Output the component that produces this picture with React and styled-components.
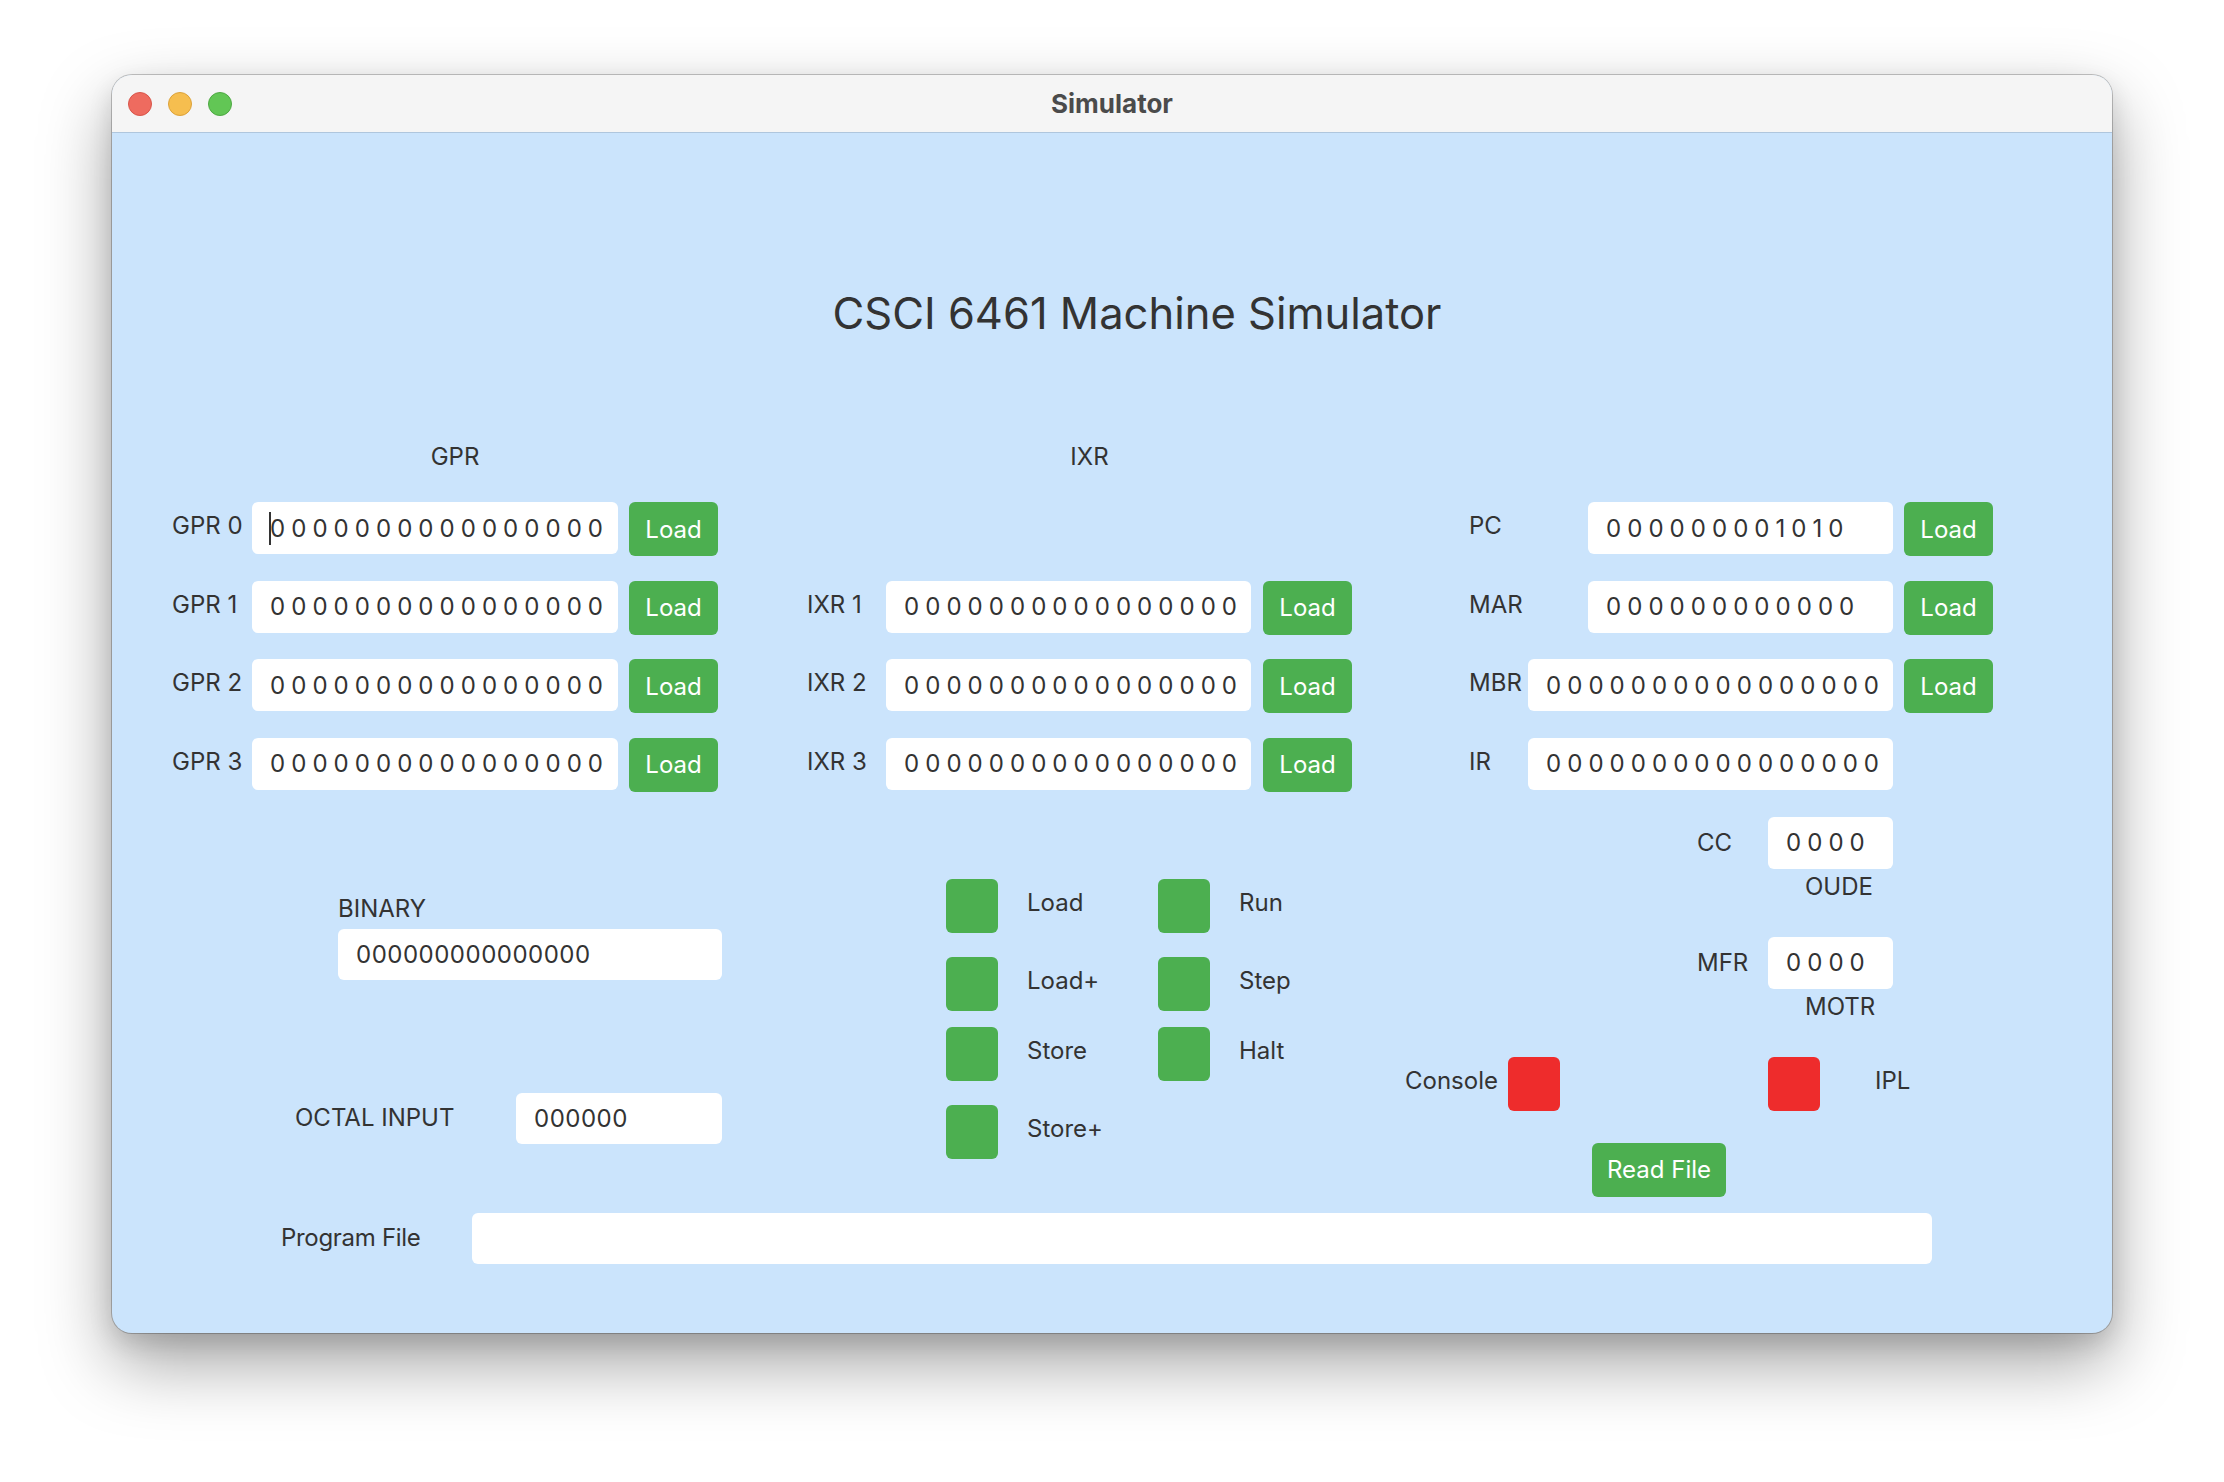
import React from 'react';
import styled, { createGlobalStyle } from 'styled-components';

const GlobalStyle = createGlobalStyle`
  html, body { margin: 0; padding: 0; background: #ffffff; }
  body { font-family: Inter, "Noto Sans", sans-serif; color: #333333; }
  *, *::before, *::after { box-sizing: border-box; }
`;

const FONT = 'Inter, "Noto Sans", sans-serif';

const Page = styled.div`
  width: 2224px;
  height: 1482px;
  padding: 75px 0 0 112px;
  background: #ffffff;
  overflow: hidden;
`;

const Window = styled.div`
  width: 2000px;
  height: 1258px;
  border-radius: 20px;
  overflow: hidden;
  display: flex;
  flex-direction: column;
  background: #cbe4fc;
  box-shadow: 0 0 0 1px rgba(0, 0, 0, 0.22), 0 30px 70px rgba(0, 0, 0, 0.36),
    0 10px 24px rgba(0, 0, 0, 0.12);
`;

const TitleBar = styled.header`
  height: 58px;
  flex: none;
  display: grid;
  grid-template-columns: 1fr auto 1fr;
  align-items: center;
  padding: 0 16px;
  background: #f5f5f5;
  border-bottom: 1px solid #afc6dd;
`;

const TrafficLights = styled.div`
  display: flex;
  gap: 16px;
`;

const Light = styled.span`
  width: 24px;
  height: 24px;
  border-radius: 50%;
  background: ${(p) => p.$fill};
  border: 1px solid ${(p) => p.$edge};
`;

const WindowTitle = styled.div`
  font-family: ${FONT};
  font-size: 26px;
  font-weight: 700;
  color: #4b4b4b;
`;

const Content = styled.main`
  flex: 1;
  padding-top: 153px;
  display: flex;
  flex-direction: column;
`;

const Title = styled.h1`
  margin: 0;
  padding-left: 50px;
  text-align: center;
  font-family: ${FONT};
  font-size: 43.5px;
  line-height: 54px;
  font-weight: 400;
  color: #333333;
`;

const RegisterArea = styled.div`
  display: flex;
  align-items: flex-start;
  margin-top: 102px;
  padding-left: 60px;
`;

const RegisterGroup = styled.section`
  display: flex;
  flex-direction: column;
  gap: 30px;
  margin-left: ${(p) => p.$offset}px;
`;

const GroupHeader = styled.div`
  height: 30px;
  line-height: 30px;
  font-size: 24px;
  text-align: center;
  padding-left: 20px;
  color: #333333;
`;

const RegisterRows = styled.div`
  display: flex;
  flex-direction: column;
  gap: 24.5px;
  padding-top: ${(p) => (p.$skip || 0) * 78.5}px;
`;

const RegisterRow = styled.div`
  display: grid;
  grid-template-columns: ${(p) => p.$labelW}px ${(p) => p.$fieldW}px 89px;
  column-gap: 11px;
  height: 54px;
  align-items: start;
`;

const RowLabel = styled.span`
  font-size: 24px;
  line-height: 30px;
  margin-top: 9px;
  white-space: nowrap;
  color: #333333;
`;

const FieldWrap = styled.div`
  position: relative;
  justify-self: ${(p) => (p.$end ? 'end' : 'start')};
`;

const Field = styled.input`
  display: block;
  width: ${(p) => p.$width}px;
  height: ${(p) => p.$height || 52}px;
  border: none;
  border-radius: 6px;
  background: #ffffff;
  padding: 0 0 0 18px;
  margin: 0;
  font-family: ${FONT};
  font-size: 24px;
  letter-spacing: 0.5px;
  word-spacing: -1.7px;
  color: #333333;
  outline: none;
`;

const Caret = styled.span`
  position: absolute;
  left: 17px;
  top: 10px;
  width: 2px;
  height: 33px;
  background: #333333;
`;

const GreenButton = styled.button`
  width: ${(p) => p.$width || 89}px;
  height: 54px;
  border: none;
  border-radius: 6px;
  background: #4caf50;
  color: #ffffff;
  font-family: ${FONT};
  font-size: 24px;
  padding: 0;
  cursor: pointer;
`;

const LowerSection = styled.div`
  display: flex;
  align-items: flex-start;
  margin-top: 25px;
`;

const InputColumn = styled.div`
  margin-left: 183px;
  margin-top: 77px;
  width: 427px;
  display: flex;
  flex-direction: column;
`;

const CaptionText = styled.span`
  display: block;
  font-size: 24px;
  line-height: 30px;
  white-space: nowrap;
  color: #333333;
  letter-spacing: ${(p) => p.$tight ? '-0.3px' : 'normal'};
`;

const BinaryBlock = styled.div`
  display: flex;
  flex-direction: column;
  gap: 5px;
  padding-left: 43px;
`;

const OctalRow = styled.div`
  display: flex;
  justify-content: space-between;
  align-items: center;
  margin-top: 113px;
`;

const ControlColumn = styled.div`
  margin-left: 224px;
  margin-top: 62px;
  width: 459px;
  display: grid;
  grid-template-columns: 52px 102px 52px auto;
  grid-template-rows: 78px 70px 78px 54px;
  column-gap: 29px;
  align-items: start;
`;

const Indicator = styled.span`
  display: block;
  width: 52px;
  height: 54px;
  border-radius: 6px;
  background: ${(p) => (p.$red ? '#ee2c2c' : '#4caf50')};
`;

const StatusColumn = styled.div`
  flex: 1;
  display: flex;
  flex-direction: column;
`;

const FlagRow = styled.div`
  display: grid;
  grid-template-columns: 71px 125px;
  align-items: center;
  padding-left: 292px;
  margin-top: ${(p) => p.$gap || 0}px;
`;

const FlagCaption = styled(CaptionText)`
  margin-top: 3px;
  padding-left: 400px;
`;

const ConsoleRow = styled.div`
  display: grid;
  grid-template-columns: 103px 260px 107px auto;
  align-items: start;
  margin-top: 35px;
`;

const ReadFileWrap = styled.div`
  margin-top: 32px;
  padding-left: 187px;
`;

const ProgramRow = styled.div`
  display: grid;
  grid-template-columns: 191px 1460px;
  align-items: center;
  padding-left: 169px;
  margin-top: 16px;
`;

const Z16 = '0 0 0 0 0 0 0 0 0 0 0 0 0 0 0 0';

const gprRows = ['GPR 0', 'GPR 1', 'GPR 2', 'GPR 3'];
const ixrRows = ['IXR 1', 'IXR 2', 'IXR 3'];
const cpuRows = [
  { name: 'PC', value: '0 0 0 0 0 0 0 0 1 0 1 0', width: 305, load: true },
  { name: 'MAR', value: '0 0 0 0 0 0 0 0 0 0 0 0', width: 305, load: true },
  { name: 'MBR', value: Z16, width: 365, load: true },
  { name: 'IR', value: Z16, width: 365, load: false },
];

const controls = [
  ['Load', 'Run'],
  ['Load+', 'Step'],
  ['Store', 'Halt'],
  ['Store+', null],
];

export default function App() {
  return (
    <>
      <GlobalStyle />
      <Page>
        <Window>
          <TitleBar>
            <TrafficLights>
              <Light $fill="#ee6b5f" $edge="#d8554a" />
              <Light $fill="#f6be4f" $edge="#dca23a" />
              <Light $fill="#62c655" $edge="#4ea843" />
            </TrafficLights>
            <WindowTitle>Simulator</WindowTitle>
            <span />
          </TitleBar>
          <Content>
            <Title>CSCI 6461 Machine Simulator</Title>

            <RegisterArea>
              <RegisterGroup $offset={0}>
                <GroupHeader>GPR</GroupHeader>
                <RegisterRows>
                  {gprRows.map((name, i) => (
                    <RegisterRow key={name} $labelW={69} $fieldW={366}>
                      <RowLabel>{name}</RowLabel>
                      <FieldWrap>
                        <Field $width={366} value={Z16} readOnly />
                        {i === 0 && <Caret />}
                      </FieldWrap>
                      <GreenButton>Load</GreenButton>
                    </RegisterRow>
                  ))}
                </RegisterRows>
              </RegisterGroup>

              <RegisterGroup $offset={89}>
                <GroupHeader>IXR</GroupHeader>
                <RegisterRows $skip={1}>
                  {ixrRows.map((name) => (
                    <RegisterRow key={name} $labelW={68} $fieldW={366}>
                      <RowLabel>{name}</RowLabel>
                      <FieldWrap>
                        <Field $width={365} value={Z16} readOnly />
                      </FieldWrap>
                      <GreenButton>Load</GreenButton>
                    </RegisterRow>
                  ))}
                </RegisterRows>
              </RegisterGroup>

              <RegisterGroup $offset={117}>
                <GroupHeader aria-hidden="true" />
                <RegisterRows>
                  {cpuRows.map((r) => (
                    <RegisterRow key={r.name} $labelW={48} $fieldW={365}>
                      <RowLabel>{r.name}</RowLabel>
                      <FieldWrap $end>
                        <Field $width={r.width} value={r.value} readOnly />
                      </FieldWrap>
                      {r.load ? <GreenButton>Load</GreenButton> : <span />}
                    </RegisterRow>
                  ))}
                </RegisterRows>
              </RegisterGroup>
            </RegisterArea>

            <LowerSection>
              <InputColumn>
                <BinaryBlock>
                  <CaptionText>BINARY</CaptionText>
                  <Field $width={384} $height={51} value="000000000000000" readOnly />
                </BinaryBlock>
                <OctalRow>
                  <CaptionText>OCTAL INPUT</CaptionText>
                  <Field $width={206} $height={51} value="000000" readOnly />
                </OctalRow>
              </InputColumn>

              <ControlColumn>
                {controls.map(([a, b]) => (
                  <React.Fragment key={a}>
                    <Indicator />
                    <RowLabel>{a}</RowLabel>
                    {b ? <Indicator /> : <span />}
                    {b ? <RowLabel>{b}</RowLabel> : <span />}
                  </React.Fragment>
                ))}
              </ControlColumn>

              <StatusColumn>
                <FlagRow>
                  <CaptionText>CC</CaptionText>
                  <Field $width={125} value="0 0 0 0" readOnly />
                </FlagRow>
                <FlagCaption>OUDE</FlagCaption>
                <FlagRow $gap={35}>
                  <CaptionText>MFR</CaptionText>
                  <Field $width={125} value="0 0 0 0" readOnly />
                </FlagRow>
                <FlagCaption>MOTR</FlagCaption>
                <ConsoleRow>
                  <RowLabel>Console</RowLabel>
                  <Indicator $red />
                  <Indicator $red />
                  <RowLabel>IPL</RowLabel>
                </ConsoleRow>
                <ReadFileWrap>
                  <GreenButton $width={134}>Read File</GreenButton>
                </ReadFileWrap>
              </StatusColumn>
            </LowerSection>

            <ProgramRow>
              <CaptionText $tight>Program File</CaptionText>
              <Field $width={1460} $height={51} value="" readOnly />
            </ProgramRow>
          </Content>
        </Window>
      </Page>
    </>
  );
}
